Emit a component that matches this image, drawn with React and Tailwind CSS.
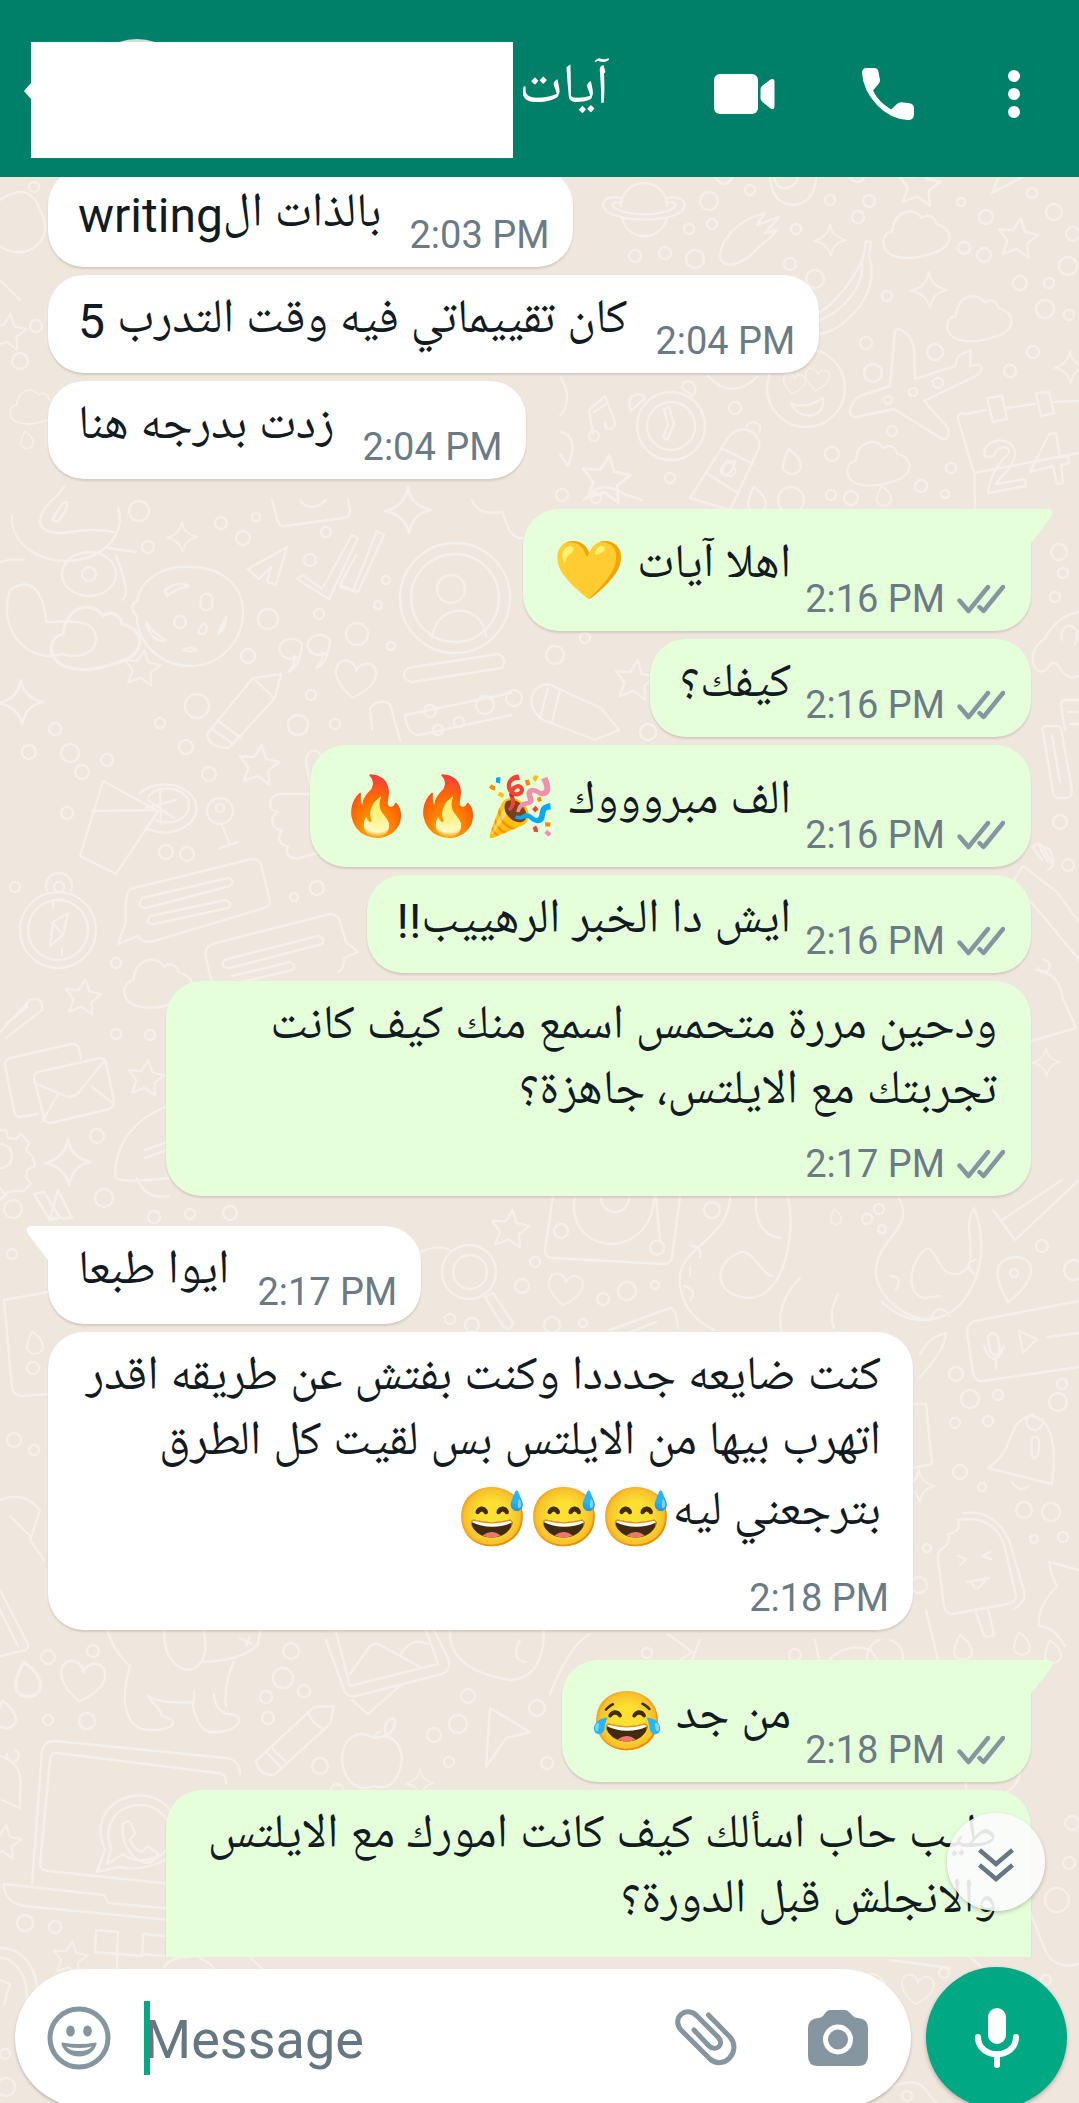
import { useState } from 'react';

const messages = [
  { id: 1, text: 'بالذات الwriting', time: '2:03 PM' },
  { id: 2, text: 'كان تقييماتي فيه وقت التدرب 5', time: '2:04 PM' },
  { id: 3, text: 'زدت بدرجه هنا', time: '2:04 PM' },
  { id: 4, text: 'اهلا آيات ', emoji: '💛', time: '2:16 PM', mine: true, first: true },
  { id: 5, text: 'كيفك؟', time: '2:16 PM', mine: true },
  { id: 6, text: 'الف مبروووك ', emoji: '🎉🔥🔥', time: '2:16 PM', mine: true },
  { id: 7, text: 'ايش دا الخبر الرهييب!!', time: '2:16 PM', mine: true },
  {
    id: 8,
    text: 'ودحين مررة متحمس اسمع منك كيف كانت تجربتك مع الايلتس، جاهزة؟',
    time: '2:17 PM',
    mine: true,
    long: true,
  },
  { id: 9, text: 'ايوا طبعا', time: '2:17 PM', first: true },
  {
    id: 10,
    text: 'كنت ضايعه جدددا وكنت بفتش عن طريقه اقدر اتهرب بيها من الايلتس بس لقيت كل الطرق بترجعني ليه',
    emoji: '😅😅😅',
    time: '2:18 PM',
    long: true,
  },
  { id: 11, text: 'من جد ', emoji: '😂', time: '2:18 PM', mine: true, first: true },
  {
    id: 12,
    text: 'طيب حاب اسألك كيف كانت امورك مع الايلتس والانجلش قبل الدورة؟',
    time: '2:18 PM',
    mine: true,
    long: true,
  },
];

// [x, y, radius]
const dots = [
  [139, 511, 10], [221, 523, 6], [243, 538, 7], [256, 517, 4], [148, 547, 6], [310, 560, 6], [326, 532, 5],
  [386, 580, 4], [268, 619, 10], [319, 614, 5], [378, 605, 4], [357, 634, 11], [248, 656, 7], [391, 646, 4],
  [197, 706, 12], [298, 725, 10], [311, 695, 5], [335, 724, 5], [160, 723, 5], [55, 729, 6], [70, 753, 9],
  [29, 752, 7], [82, 772, 7], [107, 760, 6], [186, 747, 7], [209, 774, 7], [67, 813, 6], [166, 852, 7],
  [187, 854, 7], [15, 887, 5], [294, 897, 4], [317, 888, 7], [116, 963, 5], [116, 1034, 5], [150, 1035, 5],
  [97, 1136, 7], [104, 1198, 9], [13, 1209, 9], [154, 1217, 6], [190, 1214, 5], [230, 1213, 7], [485, 705, 9],
  [430, 711, 6], [459, 722, 5], [438, 730, 5], [709, 201, 9], [750, 190, 5], [689, 229, 5], [712, 224, 5],
  [635, 256, 6], [665, 253, 6], [695, 259, 9], [796, 229, 5], [830, 200, 5], [858, 217, 6], [869, 201, 6],
  [790, 264, 6], [815, 279, 9], [887, 296, 5], [964, 248, 6], [984, 255, 7], [986, 217, 7], [1054, 212, 8],
  [1068, 266, 9], [1020, 283, 7], [1049, 283, 5], [1045, 309, 9], [1069, 315, 5], [1032, 193, 5], [961, 202, 4],
  [1073, 234, 7], [866, 343, 6], [935, 352, 8], [873, 373, 9], [1033, 352, 6], [1010, 371, 6], [938, 383, 5],
  [913, 392, 4], [888, 400, 4], [892, 431, 5], [832, 454, 7], [735, 408, 6], [670, 478, 5], [951, 468, 5],
  [921, 486, 6], [945, 494, 4], [831, 495, 5], [851, 498, 7], [791, 500, 13], [561, 1231, 7], [712, 1210, 8],
  [535, 1262, 5], [522, 1286, 7], [603, 1299, 6], [627, 1291, 9], [655, 1285, 4], [450, 1319, 5], [472, 1325, 7],
  [552, 1325, 8], [583, 1323, 4], [867, 1219, 5], [879, 1209, 5], [882, 1229, 4], [1042, 1246, 6], [956, 1374, 7],
  [970, 1399, 9], [998, 1395, 5], [955, 1423, 5], [988, 1421, 5], [960, 1472, 7], [982, 1487, 4], [1024, 1510, 8],
  [1051, 1512, 9], [1034, 1539, 4], [1063, 1537, 5], [927, 1548, 4], [919, 1585, 8], [1058, 1402, 9],
  [1062, 1384, 5], [647, 1653, 5], [795, 1655, 6], [1074, 1270, 10], [48, 1657, 7], [93, 1651, 6], [291, 1651, 8],
  [283, 1678, 10], [304, 1691, 6], [266, 1697, 6], [268, 1718, 6], [48, 1720, 5], [87, 1721, 8], [320, 1766, 8],
  [468, 1696, 7], [434, 1735, 7], [458, 1724, 9], [537, 1708, 8], [449, 1762, 5], [547, 1763, 6], [25, 1923, 8],
  [55, 1927, 6], [337, 1790, 6], [5, 2054, 5], [6, 2087, 9], [1059, 552, 8], [1063, 573, 5], [1055, 597, 5],
  [1060, 822, 7], [1068, 865, 6], [555, 655, 9], [514, 698, 8], [585, 638, 5], [648, 732, 8], [944, 1973, 5],
  [1046, 1980, 5], [907, 2096, 5], [1072, 1823, 7], [1069, 1863, 6], [1057, 1900, 12], [562, 495, 6], [596, 498, 5],
  [12, 1254, 5], [33, 1368, 6], [34, 187, 5], [36, 326, 6], [20, 361, 8], [34, 1450, 5], [14, 1440, 7],
];

// [x, y, size]
const stars = [
  [142, 668, 18], [259, 765, 20], [83, 997, 18], [146, 1078, 18], [1018, 238, 20], [606, 479, 24],
  [510, 1229, 19], [70, 1958, 17], [4, 1842, 17], [919, 185, 21], [635, 680, 20], [8, 332, 18],
];
const sparkles = [
  [182, 537, 15], [21, 702, 22], [68, 1162, 23], [408, 510, 23], [830, 240, 16], [929, 290, 18],
  [1070, 367, 16], [919, 1486, 16], [420, 1783, 14], [1046, 1062, 14],
];
const hearts = [[355, 680, 20], [82, 1682, 22], [565, 1290, 17], [794, 384, 11], [817, 380, 12], [917, 1990, 16]];
const drops = [
  [792, 462, 10], [28, 1680, 14], [6, 1715, 11], [884, 496, 8], [963, 1648, 10], [1022, 1644, 9],
  [1053, 1652, 9], [836, 1217, 6], [729, 468, 7], [757, 500, 10], [35, 1343, 9], [27, 440, 7],
];
const clouds = [[916, 236, 33], [979, 320, 32], [878, 465, 31], [158, 985, 34], [95, 640, 44], [34, 408, 24]];

const doodlePaths = [
  // planet
  'M621 206a23 23 0 0 1 46 0M622 218a23 23 0 0 0 45 0M621 198c-14-3-24 4-14 14c18 10 58 10 74 0c10-10-2-17-14-14M621 203c-8-2-12 2-5 6c14 7 43 7 56 0c7-4 3-8-5-6',
  // shooting star
  'M720 255c2-14 14-34 45-42l-8 12l22-8l-14 16l12-3l-9 10c-10 4-16 20-34 24c-8 2-14-2-14-9z',
  // banana
  'M866 241l5 1l-2 14c6 16 2 40-16 58c-14 14-24 20-38 20M866 241l-2 14c-8 22-28 48-48 60M862 264c2 20-16 46-42 56',
  // plane
  'M895 330c8-3 16 6 19 18l1 31l40-13l3-10l13-6l-1 16c14-4 14 4 6 10l-52 25l24 27c2 8-1 12-6 11l-48-30l-38 8c-10 1-6-15 4-21l30-10z',
  // calendar
  'M975 510l-1-37l-16-54q-1-8 9-5l19-4M1006 408l29-4M1054 402l25-1M987 398l15-2l5 23l-14 3zM1036 393l13-1l5 21l-13 3zM974 473l105-20',
  'M985 457c-6-18 28-24 30-4c1 12-14 22-19 31l29-5l1 7l-38 7q2-22 21-40c2-8-13-8-15 3zM1030 472l19-38l7-1l4 24l8 0l1 6l-8 2l2 18l-6 1l-4-18z',
  // alarm clock
  'M705 426a34 34 0 1 1-68 0a34 34 0 1 1 68 0M695 426a24 24 0 1 1-48 0a24 24 0 1 1 48 0M664 409l4 16l-5 12l4 3l7-16l-5-17zM631 411c-8-18 12-20 14-13zM682 388c2-14 20-4 11 8z',
  // face
  'M845 388a39 39 0 1 1-78 0a39 39 0 1 1 78 0M791 404q16 5 32-6c3 20-22 24-32 6',
  // lotion tube
  'M690 498l38-60c10-16 34-8 31 10l-29 62zM721 448l32 16M708 474l28 18M746 427c6-10 18-2 13 5M722 474c-4-8 6-12 13-13c-1 8-6 16-13 13z',
  // music notes
  'M593 434l-4-24l16-14l10 26M594 412l12-8M598 433a5 5 0 1 1-9 2a5 5 0 0 1 9-2M614 421a5 5 0 1 1-9 2',
  // cookie
  'M243 612c0 30-24 54-52 54c-30 0-54-22-54-50c-8-8-5-12 0-15c4-22 26-36 54-34c30 0 52 18 52 45zM165 590q14-10 24-4q-12 2-22 10zM186 622a6 6 0 1 1-12 0a6 6 0 1 1 12 0M212 602a6 6 0 1 1-11 0a6 6 0 1 1 11 0M198 632q6-14 9-4q-2 10-9 4zM146 622q8 12 20 18q-14 4-20-18zM218 634q8-4 8-17q-4 8-8 17zM183 650q8-4 14 0q-8 3-14 0z',
  // profile badge
  'M510 598a55 55 0 1 1-110 0a55 55 0 1 1 110 0M499 598a44 44 0 1 1-88 0a44 44 0 1 1 88 0M465 589a14 14 0 1 1-28 0a14 14 0 1 1 28 0M432 638c4-36 50-36 54-2',
  // check marks
  'M297 579l6-4l19 14l30-54l6 3l-29 61zM340 585l16-30M340 584l13 7l24-60l7 4l-26 57l-18-5',
  // paper plane
  'M248 569l39-22l-11 38l-9-3l4-15l-12 12zM490 1708l40 24l-24 6l-20 29l4-59z',
  // pencils
  'M207 734l46-56l28-4l-6 24l-46 50q-20 0-22-14zM253 678l20 19M217 720l24 18M211 728l22 16M256 1761l58-54l20-1l-4 18l-56 51q-16 0-18-14zM308 1712q4 12 14 16M266 1752l16 16M271 1747l16 16',
  'M535 690q10-10 22-2l44 20l18 22l-24 10l-52-20q-18-14-8-30zM548 688l-8 30M560 690l-8 32',
  // lemonade
  'M103 781l55 30l-42 63l-36-18zM92 811l62-1M140 793a32 24 0 1 1 8 36M148 797a22 17 0 1 1 6 22M160 790l1 34M146 808l30-8M148 800l26 18',
  // push pin
  'M233 811a13 13 0 1 1-26 0a13 13 0 1 1 26 0M222 825l8 20M220 848l18-6M224 808a4 4 0 1 1-8 0a4 4 0 1 1 8 0',
  // thumbs up
  'M312 794l-6-32c0-14 14-16 16-2l6 28M312 794h-32c-14 2-12 18-2 18c-10 6-6 18 4 18c-6 8-2 16 6 16c-4 10 4 14 12 12l20-6',
  // chat bubbles
  'M130 889l122-30q8 0 9 6l9 36q0 6-6 7l-110 33q-12 3-16-5l-20 8l8-22q-2-26 4-33zM142 898l86-20q8 2 2 8l-84 22q-10 0-4-10zM150 916l76-16q8 4 2 8l-74 16q-10 0-4-8z',
  'M212 944l118-30q8 0 10 8l6 20l12 10l-14 6q0 12-6 14M206 958q-2-10 6-14M206 958l6 26M224 960l94-24q8 2 4 8l-92 24q-10 0-6-8zM232 976l58-14q8 4 2 8l-50 12',
  // compass
  'M96 930a38 38 0 1 1-76 0a38 38 0 1 1 76 0M88 930a30 30 0 1 1-60 0a30 30 0 1 1 60 0M68 913l-5 22l-13 11l3-24zM53 923l10 12M47 891a13 13 0 1 1 24 0M64 887a5 5 0 1 1-10 0a5 5 0 1 1 10 0M53 902v6M62 948v7',
  // envelopes
  'M38 1114l-18 3q-5 0-6-6l-9-46q0-6 5-7l62-14q6 0 7 5l2 10M38 1072l62-14q5 0 6 5l8 38q0 6-5 8l-58 14q-6 0-7-5l-10-40q0-5 4-6zM34 1083l34 14q8 0 12-6l24-30M42 1122l16-28M114 1104l-22-17',
  // rocket
  'M168 1106q-52 20-53 70q0 8 54 2M137 1178q8 22 32 18M145 1150l22-8M145 1158l22-8',
  // gear
  'M0 1130l6 0l2 8l8 1l5-5l8 9l-3 7l7 7l2 9l-8 4l-1 8l5 5l-7 8l-8 0l-8 1l-8 8M0 1144a12 12 0 0 1 0 24',
  'M34 1194l10-2l16 26l-10 2zM50 1218l8-28l14 28zM0 1188l6 8',
  'M0 1032l30-32q14-4 12 10l-36 28M6 1024l22-18',
  // astronaut
  'M12 516a54 42 0 1 0 106-8M40 524c0-20 18-24 24-38M40 524q6 12 30 8q24-4 44 0M52 520l10-16q8-6 4 6l-8 12zM0 562q12-4 24-2M10 590c20-14 34 0 36 32c20 0 50-6 50 18c-2 16-20 18-34 14c-30 10-66-20-52-64z',
  'M62 574a27 22 0 1 1 54 0a27 22 0 0 1-54 0M96 574a7 7 0 1 1-14 0a7 7 0 1 1 14 0M108 548l28 4M116 556q16 40 6 44',
  'M405 715l106-22M405 715q2 20 14 20l92-20M372 730l-2-22q8-10 20-4l10 36M408 668l90-14q10 4 4 14l-90 14q-14-4-4-14z',
  // magnifier
  'M496 1272a27 27 0 1 1-54 0a27 27 0 1 1 54 0M487 1272a17 17 0 1 1-34 0a17 17 0 1 1 34 0M485 1297l8-4l20 30q-4 12-12 0zM420 1252q20-8 30-2',
  // record player
  'M553 1196l-8 54q0 8 8 8l110 6q8 0 9-7l8-60M575 1196c-6 30 14 48 38 48c24-2 40-20 41-46M601 1198a14 14 0 1 0 28 0M656 1196l4 46M663 1244a7 7 0 1 1-12 0a7 7 0 0 1 12 0',
  // scarf
  'M730 1196c0 42-48 50-50 80c-2 30 18 46 34 54M788 1196c8 40-4 100-38 102c-32 0-40-30-14-44c16-10 26 22 36 22M756 1196c-2 30 10 40 24 42M800 1278c-20 20-22 40-18 54M838 1294q-10 20-4 34M692 1246q10 0 8 12M684 1286q14 4 6 14M690 1276q0-10 0-10',
  'M898 1196c20 34-24 42-22 78c2 26 36 50 60 44c34-6 58-60 38-110c-14 20 10 58-16 66c-20 2-18-20-30-26c-18 10-24 46-4 50l16-2M882 1302q26 24 56 16M890 1276q14 0 6 14M930 1320q8-20 20-4M976 1260q-14 2-2 14',
  // map pin
  'M1008 1302c-16-26-14-44 8-45c24 2 18 26-8 45zM1018 1273a4 4 0 1 1-8 0a4 4 0 1 1 8 0',
  'M993 1210l22 30l64-60M1002 1220l60-40M920 1355q8-18 26-22q0 16-26 44M610 1330l60-22q6 0 8 20M630 1332l26-10',
  // voice note
  'M1079 1301l-104 20q-8 2-8 12l6 40q2 9 10 8l96-14M988 1337q4-8 10 0l2 14q-4 8-10 0zM984 1346q10 26 20 0M996 1360v8M1019 1331l18 8l-14 14zM1048 1337l31-4',
  // bell
  'M988 1468c30-20 16-44 42-52q30 2 22 68zM1042 1419a8 8 0 1 1-8-5M1012 1482q8 12 16 4M1032 1438q10-6 6 16q-8 14-6-16z',
  // ice cream
  'M964 1513q32-4 46 30l14 48q2 12-10 18M940 1550q12-6 8-16q14-2 10-14q34-6 46 24l12 52q0 6-8 8l-56 10q-6 0-8-8l-6-46q0-8 2-10zM976 1612l8 24q8 2 10-2l-6-26M958 1556l8 3l-6 6M990 1552l-8 4l9 3M967 1582l22-4M972 1582q4 14 14-4',
  'M912 1404l14 0l6 60l-20 4M1079 1570l-30-8q2 14 8 24q-20 20-18 40q14 0 26 20M926 1610l12 50',
  // dog
  'M108 1632q6 20 22 34c-12 40-2 64 20 64c26 0 30-10 12-14q-4-10-10-14l-4-6q12 8 44 6q6 32 22 30c30 0 32-20 12-18q-12-6-12-20M194 1702v-12M234 1662q-10 20-8 44M164 1632c0 22 10 38 26 38q20-6 14-38M204 1662q40-2 54-18l2-12M240 1638l12 6M250 1636l-4 10',
  // photos
  'M326 1640l18 50q4 8 12 6l86-22q10-4 6-16l-14-28M336 1632l14 54l88-22l-12-34M350 1674l20-28q6-4 12 0l40 22M400 1656q10-20 28-12M352 1700l16 14l34-30',
  // laptop and chat logo
  'M32 1884l10-132q2-12 14-11l170 17q14 2 14 16M40 1864l10-104q1-8 8-7l160 20q8 0 8 10M40 1864q0 6 8 7l124 13M4 1884l100 11l4 8l66 6M4 1884q0 18 20 22l146 14',
  'M97 1872l8-23c-16-34 14-60 46-52c30 8 40 52 8 66q-20 8-40 4zM107 1864l4-16c-10-26 10-48 38-42c26 8 30 44 6 52q-20 6-32-4zM123 1824q6-6 9 2l3 8l-5 6q4 10 12 12l6-6l10 8q-6 14-20 6q-18-14-15-36z',
  // apple
  'M374 1738c-16-10-32 0-32 22c2 24 18 32 32 26c16 6 26-8 28-28q-2-18-16-22zM386 1736q-4-16 8-18q4 10-8 18M374 1738q2-6 6-6',
  'M96 1930l22 2l-1 22l-22-2zM143 1934l22 2M143 1934l-1 20l22 2M118 1954l24 2M117 1954v14M0 1948c24 0 42 22 36 60M0 1958c16 0 30 20 26 46M0 1980l10 4l-6 20M190 1957q-20 0-26 10M200 1958q20 10 10 14M250 1957l12 12',
  'M0 1756q24 8 20 34l0 18l-18-8M15 1750a6 6 0 1 1-8 4',
  // left margin
  'M4 1300l44-8M4 1300l8 88q2 8 10 8l26-2M0 1500q24-10 40 10l-10 30l14 20M10 1516l20 20M0 1590l26 50q4 6 0 10l-26 6M0 1610l18 36',
  // phone and brush
  'M1079 700h-14q-4 0-4 6l4 24M1068 712h11M1070 724h9M1043 732q-2-6 4-6l10 0q4 0 5 8l10 56q0 8-6 8l-8 0q-4 0-5-6zM1052 736l8 46M1013 882l10-16l34 26l22 30M1013 882l30 34l36 44M1032 846l10 14M1038 844l10 18M1044 848l8 16M1034 846q4-6 10 2q6-2 8 8q4 8-4 14',
  'M1079 612q-22 4-34 26q-18 14-10 30q8 8 14-2q6-8 12 4q6 10 18 6M1062 640a8 10 0 1 1 12 4',
  'M1036 970q24 4 26 26l14 32l-48 14M1044 960a6 6 0 1 1-6 8',
  // top row
  'M770 178q2 26 24 27q20-2 22-27M774 178q4 12 12 10q10-2 12-10M992 193l30-16M992 193l6-14M716 178q8 12 16 0M850 178q8 8 14 0M0 200q30-20 40 10q14 26-10 40q-16 6-30-4M560 376q14 24 0 40M708 376q24 26 50 0M560 432q20 4 8 34l-8-12M584 500q16-22 40-6l18 6M0 280l20 20',
  // camera
  'M272 500l6 22q2 4 6 4l60-8q6 0 6-8l-2-10M300 500q10 14 26 0M472 500q6 16 30 12l8 20q10 10 20 4',
  // quote marks
  'M300 656a12 10 0 1 1 2-12q-2 24-14 28q8-8 6-16M328 652a12 10 0 1 1 2-12q-2 24-14 28q8-8 6-16',
  'M858 1990q10-26 24-10q16 20-20 30M966 1780q-2 30 24 20q30-10 30-30M1030 1912l16 40q10 18 33 12M890 1960l60 8M970 1957l20 18M884 2090q30-14 40-2l12 15',
  'M450 1630q-2 40 60 50q34-2 34-50M520 1640q-10 20 6 22M590 1634q-20 10-40 60M668 1634l24 18l-20 14M700 1640l-10 24l40 14M815 1640l6 30q20-30 50-20l6 10M880 1640a18 18 0 1 0 10 0',
];

function Wallpaper() {
  return (
    <svg
      className="absolute inset-0 size-full"
      viewBox="0 0 1079 2103"
      preserveAspectRatio="xMidYMin slice"
      fill="none"
      stroke="#f6f0ea"
      strokeWidth="2.4"
      strokeLinecap="round"
      strokeLinejoin="round"
      aria-hidden="true"
    >
      {dots.map(([x, y, r], i) => (
        <circle key={i} cx={x} cy={y} r={r} />
      ))}
      {stars.map(([x, y, s], i) => (
        <path
          key={i}
          transform={`translate(${x} ${y}) rotate(8) scale(${s / 20})`}
          d="M0-20L6-7L20-6L10 4L13 18L0 11L-13 18L-10 4L-20-6L-6-7Z"
        />
      ))}
      {sparkles.map(([x, y, s], i) => (
        <path
          key={i}
          transform={`translate(${x} ${y}) scale(${s / 20})`}
          d="M0-20Q2-4 20 0Q4 3 1 20Q-3 4-20 1Q-3-3 0-20Z"
        />
      ))}
      {hearts.map(([x, y, s], i) => (
        <path
          key={i}
          transform={`translate(${x} ${y}) rotate(8) scale(${s / 20})`}
          d="M0 18C-30-2-20-18-11-18C-4-18 0-12 0-9C0-12 4-18 11-18C20-18 30-2 0 18Z"
        />
      ))}
      {drops.map(([x, y, s], i) => (
        <path
          key={i}
          transform={`translate(${x} ${y}) scale(${s / 10})`}
          d="M-3-13Q9-4 9 4A9 8 0 0 1-9 4Q-8-4-3-13Z"
        />
      ))}
      {clouds.map(([x, y, s], i) => (
        <path
          key={i}
          transform={`translate(${x} ${y}) scale(${s / 33})`}
          d="M-24-4C-22-26-2-30 6-18C14-24 20-16 20-12C38-8 38 10 20 16C4 22-10 24-22 20C-38 14-34-4-24-4Z"
        />
      ))}
      {doodlePaths.map((d) => (
        <path key={d} d={d} />
      ))}
    </svg>
  );
}

function Ticks() {
  return (
    <svg
      className="h-8 w-12"
      viewBox="0 0 48 32"
      fill="none"
      stroke="#8696a0"
      strokeWidth="4.4"
      strokeLinejoin="round"
      strokeLinecap="round"
      role="img"
      aria-label="Delivered"
    >
      <path d="M2.500 17.500L11.500 28L31 4" />
      <path d="M22.500 24L26.500 28L46 4" />
    </svg>
  );
}

function Tail({ mine }) {
  return mine ? (
    <svg className="absolute top-0 left-full -ml-px h-9 w-6" viewBox="0 0 24 36" fill="#e6ffdb" aria-hidden="true">
      <path d="M0 0H18Q25 1 21 8L1 34H0Z" />
    </svg>
  ) : (
    <svg className="absolute top-0 right-full -mr-px h-9 w-6" viewBox="0 0 24 36" fill="#fff" aria-hidden="true">
      <path d="M24 0H6Q-1 1 3 8L23 34H24Z" />
    </svg>
  );
}

function Bubble({ message }) {
  const { text, emoji, time, mine, first, long } = message;

  let box = 'relative flex max-w-[88%] rounded-[36px] pl-[30px] pb-[10px] shadow-[0_2px_2px_rgba(60,40,20,0.14)]';
  box += mine ? ' bg-[#e6ffdb] pr-[26px]' : ' bg-white pr-[24px]';
  if (long) box += ' flex-col pt-[14px]';
  else if (emoji) box += ' min-h-[122px] pt-[10px]';
  else box += ' min-h-[98px] pt-1';
  if (!long) box += mine ? ' gap-[14px]' : ' gap-7';
  if (first && mine) box += ' rounded-tr-none';
  if (first && !mine) box += ' rounded-tl-none';

  return (
    <li className={`flex px-[48px] ${mine ? 'justify-end' : ''} ${first ? 'mt-[22px]' : ''}`}>
      <div className={box}>
        {first && <Tail mine={mine} />}
        <p dir="rtl" className={`leading-[65px] text-[#111b21] ${long ? 'pr-[8px]' : 'self-center'}`}>
          {text}
          {emoji && <span className="align-middle text-[58px] leading-[83px]">{emoji}</span>}
        </p>
        <div className={`flex items-center gap-3 self-end ${long ? 'mt-[17px]' : ''}`}>
          <time className="text-[38px] leading-[44px] whitespace-nowrap text-[#6b7b85]">{time}</time>
          {mine && <Ticks />}
        </div>
      </div>
    </li>
  );
}

function Header() {
  return (
    <header className="relative flex h-[177px] shrink-0 items-start bg-[#008069] pt-[42px] pr-[59px] pl-[31px] text-white">
      <div className="relative h-[116px] w-[482px] bg-white">
        <svg className="absolute top-[41px] right-full h-4 w-[7px]" viewBox="0 0 7 16" fill="#fff" aria-hidden="true">
          <path d="M7 0V16L0 8Z" />
        </svg>
        <svg className="absolute bottom-full left-[88px] h-[3px] w-[36px]" viewBox="0 0 36 3" fill="#cfe0dc" aria-hidden="true">
          <path d="M0 3Q18-3 36 3Z" />
        </svg>
      </div>
      <h1 dir="rtl" className="pl-[6px] text-[56px] leading-[98px]">آيات</h1>
      <div className="ml-auto flex h-[104px] items-center">
        <button type="button" aria-label="Video call" className="mr-[87px]">
          <svg className="h-10 w-[61px]" viewBox="0 0 61 40" fill="#fff">
            <rect width="44" height="40" rx="6" />
            <path d="M46.500 15.500Q46.500 13 48.500 11.500L56.500 5.500Q60.500 3.500 60.500 8V32Q60.500 36.500 56.500 34.500L48.500 28Q46.500 26.500 46.500 24Z" />
          </svg>
        </button>
        <button type="button" aria-label="Voice call" className="mr-[94px]">
          <svg className="size-[52px]" viewBox="0 0 52 52" fill="#fff">
            <path d="M5 0H12Q16 0 16.500 4L18 12Q18 14.500 16.500 16L11 22.500Q16 33.500 29 41.500L35 36Q37 34 39.500 34.200L47.500 35.200Q51.700 36 52 40V46Q52 52 46 52Q28 51 15 37Q1 22 0 5Q0 0 5 0Z" />
          </svg>
        </button>
        <button type="button" aria-label="More options">
          <svg className="h-12 w-3" viewBox="0 0 12 48" fill="#fff">
            <circle cx="6" cy="6" r="6" />
            <circle cx="6" cy="24" r="6" />
            <circle cx="6" cy="42" r="6" />
          </svg>
        </button>
      </div>
    </header>
  );
}

function Composer() {
  const [draft, setDraft] = useState('');

  return (
    <form
      onSubmit={(e) => e.preventDefault()}
      className="relative flex h-[146px] shrink-0 gap-[15px] overflow-hidden pt-[10px] pr-3 pl-[15px]"
    >
      <div className="mt-[2px] flex h-[138px] min-w-0 flex-1 items-center rounded-full bg-white pr-[43px] pl-[32px] shadow-[0_2px_3px_rgba(0,0,0,0.2)]">
        <button type="button" aria-label="Emoji">
          <svg className="size-16" viewBox="0 0 64 64" fill="none">
            <circle cx="32" cy="32" r="29" stroke="#8696a0" strokeWidth="5" />
            <ellipse cx="23.500" cy="25" rx="4.300" ry="5.600" fill="#8696a0" />
            <ellipse cx="40.500" cy="25" rx="4.300" ry="5.600" fill="#8696a0" />
            <path d="M15.500 36.500Q32 39.500 48.500 36.500Q50 36.500 49.500 38.500C44 54.500 20 54.500 14.500 38.500Q14 36.500 15.500 36.500Z" fill="#8696a0" />
            <path d="M19 40.500Q32 43.500 45 40.500Q41 45 32 45Q23 45 19 40.500Z" fill="#fff" />
          </svg>
        </button>
        <div className="relative ml-[33px] min-w-0 flex-1">
          <input
            value={draft}
            onChange={(e) => setDraft(e.target.value)}
            aria-label="Message"
            placeholder="Message"
            className="block h-[74px] w-full bg-transparent pt-[2px] text-[54px] text-[#111b21] outline-none placeholder:text-[#667781]"
          />
          <span className="absolute top-0 left-0 h-full w-[6px] bg-[#06a884]" />
        </div>
        <button type="button" aria-label="Attach" className="mr-[71px]">
          <svg className="h-[58px] w-[62px]" viewBox="0 0 62 58" fill="none" stroke="#8696a0" strokeWidth="5" strokeLinecap="round">
            <path d="M33.500 6L55 28C67 42 49 62 35 50L6 21C-4 9 11-4 22 7L43 28C50 36 41 43 34 37L19 21" />
          </svg>
        </button>
        <button type="button" aria-label="Camera">
          <svg className="h-[56px] w-[60px]" viewBox="0 0 60 56" fill="#8696a0">
            <path d="M22 0H37Q39 0 41 2L45 6Q47 8 50 8Q60 9 60 18V46Q60 56 50 56H10Q0 56 0 46V18Q0 9 10 8Q13 8 15 6L18 2Q20 0 22 0Z" />
            <circle cx="30" cy="29.500" r="12.500" fill="none" stroke="#fff" strokeWidth="5" />
          </svg>
        </button>
      </div>
      <button
        type="button"
        aria-label="Record voice message"
        className="flex size-[141px] shrink-0 items-center justify-center rounded-full bg-[#00a884] shadow-[0_2px_4px_rgba(0,0,0,0.25)]"
      >
        <svg className="h-[62px] w-[46px]" viewBox="0 0 46 62" fill="none" stroke="#fff" strokeWidth="6" strokeLinecap="round">
          <rect x="14" y="1" width="18" height="36" rx="9" fill="#fff" stroke="none" />
          <path d="M4 30C4 53 42 53 42 30M23 48V58" />
        </svg>
      </button>
    </form>
  );
}

export default function App() {
  return (
    <div className="relative flex h-screen flex-col overflow-hidden bg-[#efe6dd] font-[Roboto,'Noto_Naskh_Arabic_UI','Noto_Naskh_Arabic','Noto_Color_Emoji',sans-serif] text-[48px]">
      <Wallpaper />
      <Header />
      <main className="relative flex min-h-0 flex-1 flex-col">
        <div className="min-h-0 flex-1 overflow-hidden">
          <ul className="-mt-2 flex flex-col gap-2">
            {messages.map((m) => (
              <Bubble key={m.id} message={m} />
            ))}
          </ul>
        </div>
        <button
          type="button"
          aria-label="Scroll to latest"
          className="absolute right-[34px] bottom-[46px] flex size-[98px] items-center justify-center rounded-full bg-[#fcfcfc]/90 shadow-[0_2px_4px_rgba(0,0,0,0.2)]"
        >
          <svg className="h-10 w-9" viewBox="0 0 36 40" fill="none" stroke="#667781" strokeWidth="4.400">
            <path d="M1.500 8L18 22L34.500 8M1.500 23L18 37L34.500 23" />
          </svg>
        </button>
      </main>
      <Composer />
    </div>
  );
}
